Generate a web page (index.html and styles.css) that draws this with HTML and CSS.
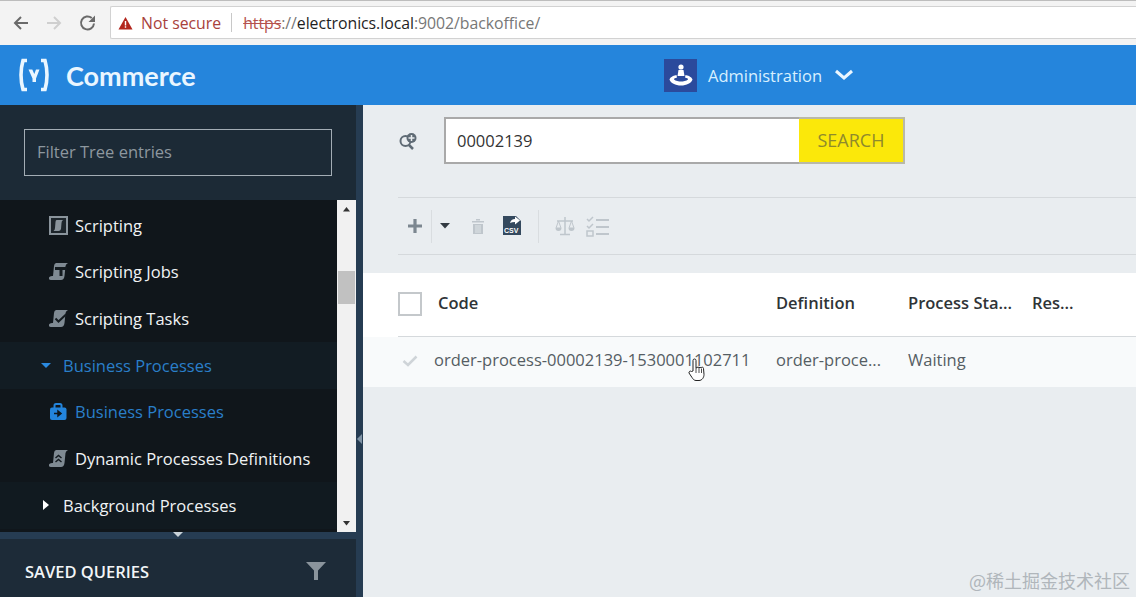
FILE: index.html
```html
<!DOCTYPE html>
<html lang="en">
<head>
<meta charset="utf-8">
<title>Commerce Backoffice</title>
<link rel="stylesheet" href="styles.css">
</head>
<body>
<div class="page">
  <div class="chrome">
    <svg class="nav-icon" width="20" height="20" viewBox="0 0 20 20"><path d="M17 10H4M10 4l-6 6 6 6" fill="none" stroke="#6a6a6a" stroke-width="2"/></svg>
    <svg class="nav-icon" width="20" height="20" viewBox="0 0 20 20"><path d="M3 10h13M10 4l6 6-6 6" fill="none" stroke="#cfcfcf" stroke-width="2"/></svg>
    <svg class="nav-icon" width="20" height="20" viewBox="0 0 20 20"><path d="M16 10.500A6.500 6.500 0 1 1 13.800 5" fill="none" stroke="#6a6a6a" stroke-width="2"/><path d="M17 2.500v6.500h-6.500z" fill="#6a6a6a"/></svg>
    <div class="urlbar">
      <svg width="15" height="14" viewBox="0 0 15 14"><path d="M7.500 1L14.500 13.500H.5z" fill="#b3261e"/><path d="M6.800 5h1.400v4.500H6.800zM6.800 10.300h1.400v1.500H6.800z" fill="#fff"/></svg>
      <span class="insecure">Not secure</span>
      <span class="url-sep"></span>
      <span class="url"><s class="scheme">https</s><span class="dim">://</span>electronics.local<span class="dim">:9002/backoffice/</span></span>
    </div>
  </div>

  <header class="topbar">
    <div class="brand">
      <svg class="logo" width="30" height="34" viewBox="0 0 30 34"><path d="M8 2.500H4Q2 9.500 2 17t2 14.500h4M22 2.500h4Q28 9.500 28 17t-2 14.500h-4" fill="none" stroke="#eaf6ff" stroke-width="3.600"/><path d="M9.500 11.500h3.800l2 4.500 1.700-4.500h3.500L17 20.500v3.500h-3.500v-3.500z" fill="#eaf6ff"/></svg>
      <span class="brand-name">Commerce</span>
    </div>
    <div class="perspective">
      <span class="persp-icon">
        <svg width="28" height="26" viewBox="0 0 28 26"><circle cx="14" cy="5" r="2.600" fill="#fff"/><path d="M11.500 8h5l1 6h-7z" fill="#fff"/><path d="M2.500 17.500c1-3 5-4 7-4.500l.5 2.500c-2 .5-3 1-3 2 1.500 1.500 5 2 7 2s5.500-.5 7-2c0-1-1-1.500-3-2l.5-2.500c2 .5 6 1.500 7 4.500-1 3.500-6 6-11.500 6S3.500 21 2.500 17.500z" fill="#fff"/></svg>
      </span>
      <span class="persp-name">Administration</span>
      <svg width="20" height="12" viewBox="0 0 20 12"><path d="M2 2l8 7 8-7" fill="none" stroke="#eaf6ff" stroke-width="3"/></svg>
    </div>
  </header>

  <div class="main">
    <aside class="sidebar">
      <div class="side-inner">
        <div class="filter-wrap"><div class="filter">Filter Tree entries</div></div>
        <div class="tree-wrap">
          <ul class="tree">
            <li class="row leaf">
              <svg class="ticon" width="19" height="19" viewBox="0 0 19 19"><rect width="19" height="19" fill="#8a949c"/><rect x="2" y="2" width="15" height="15" fill="#1d252b"/><path d="M7.500 4H14q-1.500 1-1.500 3l-.5 6q-.5 2-2.500 2H4.500q1.500-1 1.500-3l.5-6q0-1.500 1-2z" fill="#8a949c"/></svg>
              <span>Scripting</span>
            </li>
            <li class="row leaf">
              <svg class="ticon" width="19" height="19" viewBox="0 0 19 19"><path d="M7 1h12q-2 1-2.500 3l-1 10q-.5 4-3.500 4H2q-2.500 0-2-2.500.5-1.500 3-1.500h1l1-10q.2-2.500 2-3z" fill="#7f8a93"/><path d="M6 5h12v3h-4.500v6h-3V8H6z" fill="#141b20"/></svg>
              <span>Scripting Jobs</span>
            </li>
            <li class="row leaf">
              <svg class="ticon" width="19" height="19" viewBox="0 0 19 19"><path d="M7 1h12q-2 1-2.500 3l-1 10q-.5 4-3.500 4H2q-2.500 0-2-2.500.5-1.500 3-1.500h1l1-10q.2-2.500 2-3z" fill="#7f8a93"/><path d="M6.500 9.500l3 3L17 5.500" fill="none" stroke="#141b20" stroke-width="2"/></svg>
              <span>Scripting Tasks</span>
            </li>
            <li class="row group active">
              <svg class="caret" width="10" height="10" viewBox="0 0 10 10"><path d="M0 3h10L5 8z" fill="#2a8ae0"/></svg>
              <span>Business Processes</span>
            </li>
            <li class="row leaf selected">
              <svg class="ticon" width="19" height="19" viewBox="0 0 19 19"><path d="M5.500 6V3.500q0-1.500 1.500-1.500h4q1.500 0 1.500 1.500V6" fill="none" stroke="#2384dc" stroke-width="2"/><rect x="1" y="5.500" width="16.500" height="12.500" rx="2" fill="#2384dc"/><path d="M5 11.500h4.500M9 9l3 2.500-3 2.500z" fill="#10171c" stroke="#10171c" stroke-width="1.500"/></svg>
              <span>Business Processes</span>
            </li>
            <li class="row leaf">
              <svg class="ticon" width="19" height="19" viewBox="0 0 19 19"><path d="M7 1h12q-2 1-2.500 3l-1 10q-.5 4-3.500 4H2q-2.500 0-2-2.500.5-1.500 3-1.500h1l1-10q.2-2.500 2-3z" fill="#7f8a93"/><path d="M6.500 9l3-2.500 3 2.500M6.500 13l3-2.500 3 2.500" fill="none" stroke="#141b20" stroke-width="1.500"/></svg>
              <span>Dynamic Processes Definitions</span>
            </li>
            <li class="row group">
              <svg class="caret" width="10" height="10" viewBox="0 0 10 10"><path d="M2 0l6 5-6 5z" fill="#fff"/></svg>
              <span>Background Processes</span>
            </li>
          </ul>
          <div class="scrollbar">
            <svg width="19" height="14" viewBox="0 0 19 14"><path d="M6 9.500l3.500-4.500 3.500 4.500z" fill="#333"/></svg>
            <div class="track"><div class="thumb"></div></div>
            <svg width="19" height="14" viewBox="0 0 19 14"><path d="M6 5l3.500 4.500L13 5z" fill="#333"/></svg>
          </div>
        </div>
        <div class="split"><svg width="12" height="6" viewBox="0 0 12 6"><path d="M1 0h10L6 5z" fill="#c9d3da"/></svg></div>
        <div class="saved">
          <span class="saved-title">SAVED QUERIES</span>
          <svg width="22" height="20" viewBox="0 0 22 20"><path d="M1 1h20l-8 8.500V19h-4V9.500z" fill="#8a949c"/></svg>
        </div>
      </div>
      <div class="side-edge"><svg width="5" height="10" viewBox="0 0 5 10"><path d="M5 0v10L0 5z" fill="#7f93a5"/></svg></div>
    </aside>

    <section class="content">
      <div class="search">
        <svg class="search-icon" width="20" height="20" viewBox="0 0 20 20"><circle cx="7.500" cy="9" r="5" fill="none" stroke="#5f6b75" stroke-width="2"/><path d="M11 13l4 4" stroke="#5f6b75" stroke-width="2.500"/><circle cx="13.500" cy="6" r="5" fill="#5f6b75"/><path d="M13.500 3v6M10.500 6h6" stroke="#e9edf0" stroke-width="1.500"/></svg>
        <div class="search-box">
          <div class="search-input">00002139</div>
          <div class="search-btn">SEARCH</div>
        </div>
      </div>
      <div class="toolbar">
        <svg class="tb-add" width="16" height="16" viewBox="0 0 16 16"><path d="M8 1v14M1 8h14" stroke="#7c8790" stroke-width="3.200"/></svg>
        <span class="tb-sep"></span>
        <svg class="tb-drop" width="12" height="6" viewBox="0 0 12 6"><path d="M1 0h10L6 5.500z" fill="#333b42"/></svg>
        <svg class="tb-trash" width="12" height="15" viewBox="0 0 12 15"><path d="M0 2h12v1.500H0zM4 0h4v1.500H4zM1 5h10v10H1z" fill="#bfc6cc"/><path d="M4 6v8M6 6v8M8 6v8" stroke="#e9edf0" stroke-width=".8"/></svg>
        <svg class="tb-csv" width="18" height="20" viewBox="0 0 18 20"><path d="M0 1h13l5 5v14H0z" fill="#34495e"/><path d="M7 8q1-4 5-4V1.500L17 5.500l-5 4V7q-3 0-5 1z" fill="#fff"/><text x="1" y="18" class="csv-text">CSV</text></svg>
        <span class="tb-sep tb-sep2"></span>
        <svg class="tb-scale" width="20" height="20" viewBox="0 0 20 20"><path d="M10 1v17M5 18.500h10M2 5h16" stroke="#bfc6cc" stroke-width="1.500"/><path d="M3.500 5L1 12h5zM16.500 5L14 12h5z" fill="none" stroke="#bfc6cc"/><path d="M.5 12h6a3 3 0 0 1-6 0zM13.500 12h6a3 3 0 0 1-6 0z" fill="#bfc6cc"/></svg>
        <svg class="tb-list" width="23" height="22" viewBox="0 0 23 22"><path d="M1 4l2 2 4-4M1 11l2 2 4-4" fill="none" stroke="#bfc6cc" stroke-width="1.500"/><rect x="1" y="16" width="6" height="5" fill="none" stroke="#bfc6cc" stroke-width="1.500"/><path d="M10 5h13M10 12h13M10 19h13" stroke="#bfc6cc" stroke-width="2"/></svg>
      </div>
      <div class="grid">
        <div class="grid-head">
          <span class="check"></span>
          <span class="col-code head-code">Code</span>
          <span class="col-def">Definition</span>
          <span class="col-state">Process Sta...</span>
          <span class="col-res">Res...</span>
        </div>
        <div class="grid-row">
          <svg class="row-check" width="16" height="12" viewBox="0 0 16 12"><path d="M1.500 6l4.500 4 8.500-8.500" fill="none" stroke="#cfd4d8" stroke-width="2.500"/></svg>
          <span class="col-code">order-process-00002139-1530001102711</span>
          <span class="col-def">order-proce...</span>
          <span class="col-state">Waiting</span>
          <span class="col-res"></span>
        </div>
      </div>
    </section>
  </div>

  <svg class="cursor" width="18" height="25" viewBox="0 0 18 25"><path d="M5 13V2.500a1.500 1.500 0 0 1 3 0V10l1-.5a1.300 1.300 0 0 1 2 .2 1.300 1.300 0 0 1 2 .3 1.300 1.300 0 0 1 2.500.5l.5 6c0 3-2 6-5 6H8c-2 0-3-1.500-4-3L1 15c-.5-1.500 1.500-2.500 2.500-1.500z" fill="#fff" stroke="#222" stroke-width="1"/><path d="M8 10v5M11 10v5M13.500 10.500V15" stroke="#222" stroke-width=".8"/></svg>
  <div class="watermark">@稀土掘金技术社区</div>
</div>
</body>
</html>
```

FILE: styles.css
```css
* { box-sizing: border-box; }
html, body { margin: 0; padding: 0; }
body {
  width: 1136px;
  height: 597px;
  overflow: hidden;
  font-family: "Open Sans", "Noto Sans", sans-serif;
  background: #e9edf0;
}
.page {
  position: relative;
  width: 1136px;
  height: 597px;
  display: flex;
  flex-direction: column;
}

/* browser chrome */
.chrome {
  height: 45px;
  flex: none;
  background: #f3f3f3;
  border-top: 1px solid #bdbdbd;
  display: flex;
  align-items: center;
  padding-left: 11px;
}
.nav-icon { flex: none; margin-right: 13px; margin-top: -1px; }
.nav-icon:nth-child(3) { margin-right: 12px; margin-left: 1px; }
.urlbar {
  flex: 1;
  height: 33px;
  margin-top: -1px;
  background: #fff;
  border: 1px solid #d2d2d2;
  border-right: 0;
  border-radius: 2px 0 0 2px;
  display: flex;
  align-items: center;
  padding-left: 7px;
  font-size: 16px;
}
.insecure { color: #a8413c; margin-left: 8px; font-size: 15.800px; }
.url-sep { width: 1px; height: 19px; background: #c8c8c8; margin: 0 11px 0 10px; }
.url { color: #1f1f1f; font-size: 15.850px; letter-spacing: -.05px; }
.scheme { color: #b5524d; text-decoration-color: #b5524d; }
.dim { color: #777; }

/* app header */
.topbar {
  height: 60px;
  flex: none;
  background: #2585dc;
  display: flex;
  align-items: center;
}
.brand { width: 363px; flex: none; display: flex; align-items: center; padding-left: 19px; gap: 17px; }
.brand-name { color: #eaf6ff; font-family: "Lato", sans-serif; font-size: 27px; font-weight: 700; line-height: 1; }
.perspective { margin-left: 301px; display: flex; align-items: center; }
.persp-icon { width: 33px; height: 33px; background: #2b4a9c; display: flex; align-items: center; justify-content: center; }
.persp-name { color: #d8f0ff; font-size: 16.500px; margin: 0 12px 0 11px; }

.main { flex: 1; display: flex; min-height: 0; }

/* sidebar */
.sidebar { width: 363px; flex: none; display: flex; background: #1d2b38; }
.side-inner { width: 356px; flex: none; display: flex; flex-direction: column; }
.side-edge {
  width: 7px; flex: none; background: #263c52;
  display: flex; align-items: center; justify-content: center;
  padding-top: 176px;
}
.filter-wrap { height: 95px; flex: none; padding: 24px 24px 0; background: #1c2a36; }
.filter {
  width: 308px;
  height: 47px;
  border: 1px solid #a3adb5;
  color: #8d979f;
  font-size: 16.500px;
  line-height: 43px;
  padding-left: 12px;
}
.tree-wrap { height: 332px; flex: none; display: flex; background: #10161b; }
.tree { list-style: none; margin: 0; padding: 2px 0 0; flex: 1; overflow: hidden; }
.row {
  height: 46.670px;
  display: flex;
  align-items: center;
  color: #f0f3f5;
  font-size: 16.500px;
}
.leaf { padding-left: 49px; }
.leaf .ticon { margin-right: 7px; flex: none; }
.group { padding-left: 41px; }
.group .caret { margin-right: 12px; flex: none; }
.group { background: #111a20; }
.active { background: #121c23; color: #2a7fc9; }
.selected { color: #2a7fc9; }
.scrollbar {
  width: 19px;
  flex: none;
  background: #f1f1f1;
  display: flex;
  flex-direction: column;
  padding: 2px 0;
}
.scrollbar svg { flex: none; }
.track { flex: 1; padding-top: 55px; }
.thumb { width: 17px; height: 33px; background: #c1c1c1; margin-left: 1px; }
.split {
  height: 7px; flex: none; background: #263c52;
  display: flex; justify-content: center;
}
.saved {
  flex: 1;
  display: flex;
  align-items: center;
  justify-content: space-between;
  padding: 6px 29px 0 25px;
  background: #1d2b38;
}
.saved-title { color: #f2f5f7; font-size: 16.500px; font-weight: 600; }

/* content */
.content { flex: 1; padding-left: 35px; min-width: 0; }
.search { height: 92px; display: flex; align-items: flex-start; padding-top: 12px; }
.search-icon { flex: none; margin: 15px 26px 0 0; }
.search-box { display: flex; height: 47px; }
.search-input {
  width: 355px;
  background: #fff;
  border: 1px solid #a9a9a9;
  border-width: 2px 0 2px 2px;
  color: #333;
  font-size: 16.500px;
  line-height: 43px;
  padding-left: 11px;
}
.search-btn {
  width: 106px;
  background: #fbe80a;
  border: 2px solid #b9b9a8;
  border-left: 0;
  color: #8f8a2c;
  font-size: 18px;
  line-height: 43px;
  text-align: center;
}
.toolbar {
  height: 58px;
  border-top: 1px solid #d5d9dc;
  border-bottom: 1px solid #d5d9dc;
  display: flex;
  align-items: center;
}
.tb-add { margin-left: 9px; flex: none; }
.tb-sep { width: 1px; height: 33px; background: #d9dde0; margin-left: 8px; flex: none; }
.tb-drop { margin-left: 7px; flex: none; }
.tb-trash { margin-left: 21px; flex: none; }
.tb-csv { margin-left: 19px; margin-top: -2px; flex: none; }
.tb-sep2 { margin-left: 17px; }
.tb-scale { margin-left: 16px; flex: none; }
.tb-list { margin-left: 11px; flex: none; }
.csv-text { font-family: "Liberation Sans", sans-serif; font-size: 7px; font-weight: 700; fill: #fff; }

.grid { margin: 18px 0 0 -35px; }
.grid-head {
  height: 64px;
  background: #fff;
  display: flex;
  align-items: center;
  padding: 0 0 6px 35px;
  color: #2f3437;
  font-size: 16.500px;
  font-weight: 600;
  position: relative;
}
.grid-head::after {
  content: "";
  position: absolute;
  left: 35px;
  right: 0;
  bottom: 0;
  height: 1px;
  background: #d5d9dc;
}
.check { width: 24px; height: 24px; border: 2px solid #c4c8cb; background: #fff; flex: none; margin-right: 16px; margin-top: 3px; }
.grid-row {
  height: 50px;
  background: #f8fafb;
  display: flex;
  align-items: center;
  padding: 0 0 6px 39px;
  color: #555d63;
  font-size: 16.500px;
}
.row-check { flex: none; margin-right: 16px; margin-top: 4px; }
.head-code { width: 338px; flex: none; }
.grid-row .col-code { width: 342px; flex: none; white-space: nowrap; }
.col-def { width: 132px; flex: none; white-space: nowrap; }
.col-state { width: 124px; flex: none; white-space: nowrap; }
.col-res { flex: none; }

/* overlays */
.cursor { position: absolute; left: 688px; top: 358px; }
.watermark {
  position: absolute;
  right: 6px;
  top: 570px;
  color: #b0b6bb;
  font-family: "Noto Sans CJK SC", sans-serif;
  font-size: 18px;
  line-height: 20px;
}
```
